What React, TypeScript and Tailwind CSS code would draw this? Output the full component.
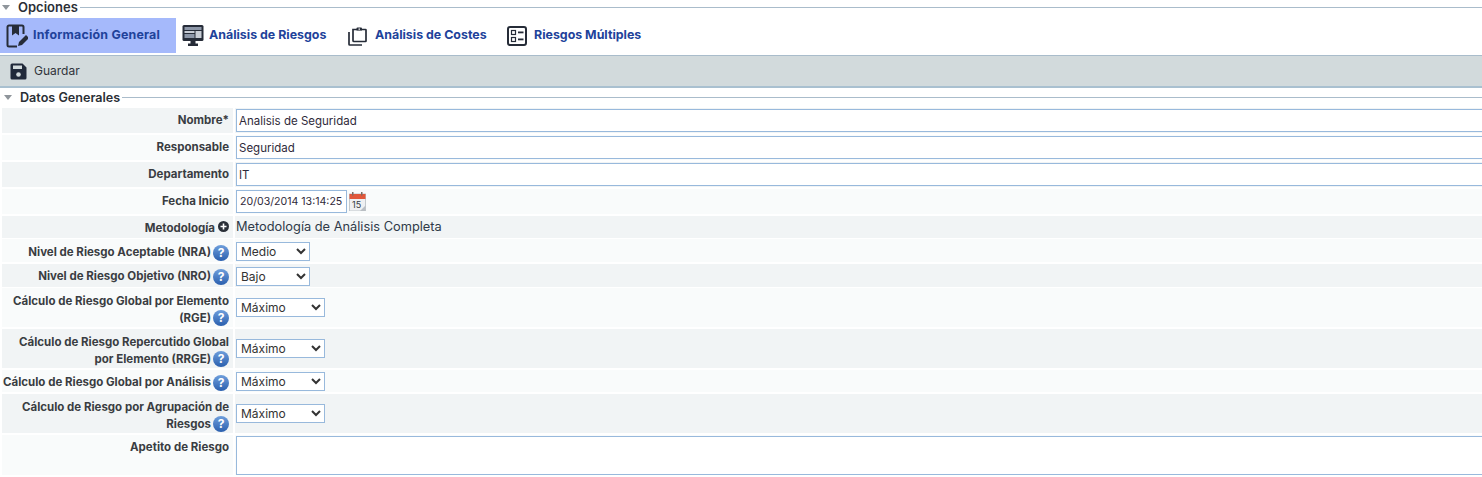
import React from 'react';

const Triangle = () => (
  <svg width="8" height="5" viewBox="0 0 8 5" className="shrink-0">
    <path d="M0 0h8L4 5z" fill="#8f959b" />
  </svg>
);

const Legend = ({ title, titleClass }: { title: string; titleClass: string }) => (
  <div className="flex items-center">
    <Triangle />
    <span className={`font-semibold leading-4 text-[#2b2f36] ${titleClass}`}>{title}</span>
    <div className="flex-1 h-px bg-[#aabccb] ml-[2px]" />
  </div>
);

const BookEditIcon = () => (
  <svg width="22" height="24" viewBox="0 0 22 24" fill="none" className="shrink-0">
    <path d="M16 1.500H3a1.500 1.500 0 0 0-1.500 1.500v18A1.500 1.500 0 0 0 3 22.500h8" stroke="#262c38" strokeWidth="2" />
    <path d="M16 1.500a1.500 1.500 0 0 1 1.500 1.500v7" stroke="#262c38" strokeWidth="2" />
    <path d="M6 1.500h7v10l-3.500-2.500L6 11.500z" fill="#262c38" />
    <path d="M12 22l1-4 7-7 3 3-7 7z" fill="#262c38" />
  </svg>
);

const MonitorIcon = () => (
  <svg width="22" height="21" viewBox="0 0 22 21" className="shrink-0">
    <rect x="0.500" y="0" width="21" height="16" rx="1.500" fill="#262c38" />
    <rect x="2.500" y="2" width="17" height="3" fill="#8d97a8" />
    <rect x="2.500" y="6" width="10" height="2" fill="#c9ced6" />
    <rect x="13.500" y="6" width="6" height="7" fill="#c9ced6" />
    <rect x="2.500" y="9" width="10" height="4" fill="#8d97a8" />
    <path d="M8.500 16h5v2.500h2.500V21H6v-2.500h2.500z" fill="#262c38" />
  </svg>
);

const ClipboardIcon = () => (
  <svg width="19" height="20" viewBox="0 0 19 20" fill="none" className="shrink-0">
    <path d="M5 3.500h12.500a.5.5 0 0 1 .5.5v11a.5.5 0 0 1-.5.5H6a1 1 0 0 1-1-1z" stroke="#262c38" strokeWidth="1.700" />
    <path d="M1 6v12.200a.8.8 0 0 0 .8.8H14" stroke="#262c38" strokeWidth="1.700" />
    <path d="M8.500 4.500V2.500a1 1 0 0 1 1-1h3.500a1 1 0 0 1 1 1v2z" fill="#262c38" />
    <rect x="10.500" y="2.500" width="1.500" height="1.200" fill="#fff" />
  </svg>
);

const ListIcon = () => (
  <svg width="20" height="20" viewBox="0 0 20 20" fill="none" className="shrink-0">
    <rect x="1" y="1" width="18" height="18" rx="2" stroke="#262c38" strokeWidth="2" />
    <rect x="4.500" y="4.500" width="4" height="4" stroke="#262c38" strokeWidth="1.200" />
    <rect x="4.500" y="11.500" width="4" height="4" stroke="#262c38" strokeWidth="1.200" />
    <rect x="11" y="5.500" width="5.500" height="1.800" fill="#262c38" />
    <rect x="11" y="12.500" width="5.500" height="1.800" fill="#262c38" />
  </svg>
);

const SaveIcon = () => (
  <svg width="17" height="17" viewBox="0 0 17 17" className="shrink-0">
    <path d="M2 .5h10.500L16.500 4.500V15a1.500 1.500 0 0 1-1.500 1.500H2A1.500 1.500 0 0 1 .5 15V2A1.500 1.500 0 0 1 2 .5z" fill="#20293a" />
    <rect x="3" y="2.500" width="9" height="3.500" fill="#d2dadc" />
    <circle cx="8.500" cy="11.500" r="2.300" fill="#d2dadc" />
  </svg>
);

const CalendarIcon = () => (
  <svg width="17" height="19" viewBox="0 0 17 19" className="shrink-0">
    <rect x="0.500" y="2" width="16" height="17" fill="#eef0f2" stroke="#c3c8cc" />
    <rect x="0.500" y="2" width="16" height="5" fill="#e2573a" />
    <rect x="3" y="0" width="1.500" height="3.500" fill="#7b6a62" />
    <rect x="12" y="0" width="1.500" height="3.500" fill="#7b6a62" />
    <path d="M11 19l5.500-5.500V19z" fill="#b9bec3" />
    <text x="3" y="16" fontSize="9" fill="#333a44" fontFamily="Inter, sans-serif">15</text>
  </svg>
);

const PlusIcon = () => (
  <svg width="11" height="11" viewBox="0 0 11 11" className="shrink-0 mb-[2px] ml-[3px]">
    <circle cx="5.500" cy="5.500" r="5.500" fill="#2a2f38" />
    <path d="M5.500 2.500v6M2.500 5.500h6" stroke="#fff" strokeWidth="1.600" />
  </svg>
);

const Help = () => (
  <span className="inline-flex align-middle items-center justify-center w-4 h-4 ml-[2px] rounded-full bg-gradient-to-b from-[#6f9fdc] to-[#2a5fae] text-white text-[12px] font-bold leading-none">?</span>
);

const Tab = ({ icon, label, className, textClass }: { icon: React.ReactNode; label: string; className: string; textClass?: string }) => (
  <div className={`flex items-center h-full ${className}`}>
    {icon}
    <span className={`font-bold text-[12.4px] text-[#21429a] ${textClass ?? ''}`}>{label}</span>
  </div>
);

const Row = ({ label, help, h, odd, extra, labelPad, gap, valueClass, children }: {
  label: React.ReactNode;
  help?: boolean;
  h: string;
  odd: boolean;
  extra?: React.ReactNode;
  labelPad?: string;
  gap?: string;
  valueClass?: string;
  children: React.ReactNode;
}) => (
  <div className={`flex gap-[2px] ml-[2px] ${gap ?? 'mb-[2px]'} ${h}`}>
    <div className={`w-[231px] shrink-0 flex pr-[4px] ${labelPad ?? 'items-center'} justify-end ${odd ? 'bg-[#f1f4f5]' : 'bg-[#f9fbfb]'}`}>
      <div className="text-right font-bold text-[11.5px] leading-[17px] text-[#3a3d42]">
        {label}
        {help && <Help />}
      </div>
      {extra}
    </div>
    <div className={`flex-1 min-w-0 flex pl-px ${valueClass ?? 'items-center'} ${odd ? 'bg-[#f1f4f5]' : 'bg-[#f9fbfb]'}`}>{children}</div>
  </div>
);

const TextField = ({ value, className }: { value: string; className?: string }) => (
  <input
    readOnly
    value={value}
    className={`h-[23px] shrink-0 bg-white border border-[#98b9dc] text-[#2f2a3a] outline-none ${className ?? 'px-[2px] w-[calc(100%+4px)] text-[11.5px]'}`}
  />
);

const Dropdown = ({ value, options, width }: { value: string; options: string[]; width: string }) => (
  <select
    defaultValue={value}
    className={`h-[19px] ${width} bg-white border border-[#98b9dc] text-[12px] text-[#333] outline-none`}
  >
    {options.map((o) => (
      <option key={o}>{o}</option>
    ))}
  </select>
);

const niveles = ['Bajo', 'Medio', 'Alto'];
const calculos = ['Máximo', 'Media'];

export default function App() {
  return (
    <div className="w-[1482px] h-[477px] overflow-hidden bg-white font-['Inter',sans-serif]">
      <div className="pl-[2px] h-[14px] -mt-px">
        <Legend title="Opciones" titleClass="ml-[8px] text-[13px]" />
      </div>

      <div className="flex items-center h-[35px] mt-[5px] mb-[2px]">
        <Tab className="w-[176px] bg-[#a5b9fb] pl-[6px] gap-[5px]" textClass="tracking-[0.2px]" icon={<BookEditIcon />} label="Información General" />
        <Tab className="ml-[6px] w-[166px] gap-[5px]" icon={<MonitorIcon />} label="Análisis de Riesgos" />
        <Tab className="w-[159px] gap-[8px]" icon={<ClipboardIcon />} label="Análisis de Costes" />
        <Tab className="gap-[7px]" icon={<ListIcon />} label="Riesgos Múltiples" />
      </div>

      <div className="flex items-center gap-[7px] h-[33px] pl-[10px] bg-[#d2dadc] border-t border-t-[#a9bccb] border-b-2 border-b-[#a9c0d0]">
        <SaveIcon />
        <span className="text-[12px] text-[#30333a]">Guardar</span>
      </div>

      <div className="pl-[4px] h-[19px] mb-px flex flex-col justify-center">
        <Legend title="Datos Generales" titleClass="ml-[8px] text-[12.6px]" />
      </div>

      <Row label="Nombre*" h="h-[25px]" odd>
        <TextField value="Analisis de Seguridad" />
      </Row>
      <Row label="Responsable" h="h-[25px]" odd={false}>
        <TextField value="Seguridad" />
      </Row>
      <Row label="Departamento" h="h-[25px]" odd>
        <TextField value="IT" />
      </Row>
      <Row label="Fecha Inicio" h="h-[25px]" odd={false}>
        <TextField value="20/03/2014 13:14:25" className="px-[3px] w-[111px] text-[10.6px]" />
        <span className="ml-[2px]"><CalendarIcon /></span>
      </Row>
      <Row label={<span className="relative top-px">Metodología</span>} h="h-[22px]" gap="mb-px" odd extra={<PlusIcon />}>
        <span className="text-[12.8px] text-[#2f3a48]">Metodología de Análisis Completa</span>
      </Row>
      <Row label="Nivel de Riesgo Aceptable (NRA)" help h="h-[23px]" odd={false} labelPad="items-center pt-[4px]" valueClass="items-center pt-[2px]">
        <Dropdown value="Medio" options={niveles} width="w-[74px]" />
      </Row>
      <Row label="Nivel de Riesgo Objetivo (NRO)" help h="h-[23px]" gap="mb-px" odd labelPad="items-center pt-[2px]" valueClass="items-center pt-[2px]">
        <Dropdown value="Bajo" options={niveles} width="w-[74px]" />
      </Row>
      <Row label={<>Cálculo de Riesgo Global por Elemento<br />(RGE)</>} help h="h-[39px]" odd={false} labelPad="items-center pt-[4px]">
        <Dropdown value="Máximo" options={calculos} width="w-[89px]" />
      </Row>
      <Row label={<>Cálculo de Riesgo Repercutido Global<br />por Elemento (RRGE)</>} help h="h-[39px]" odd labelPad="items-center pt-[4px]">
        <Dropdown value="Máximo" options={calculos} width="w-[89px]" />
      </Row>
      <Row label="Cálculo de Riesgo Global por Análisis" help h="h-[22px]" odd={false} labelPad="items-center pt-[3px]" valueClass="items-center pt-px">
        <Dropdown value="Máximo" options={calculos} width="w-[89px]" />
      </Row>
      <Row label={<>Cálculo de Riesgo por Agrupación de<br />Riesgos</>} help h="h-[39px]" odd labelPad="items-center pt-[4px]">
        <Dropdown value="Máximo" options={calculos} width="w-[89px]" />
      </Row>
      <Row label="Apetito de Riesgo" h="h-[40px]" odd={false} labelPad="items-start pt-[4px]" valueClass="items-start pt-px">
        <textarea readOnly className="h-[39px] w-[calc(100%+4px)] shrink-0 resize-none bg-white border border-[#98b9dc] outline-none" />
      </Row>
    </div>
  );
}
